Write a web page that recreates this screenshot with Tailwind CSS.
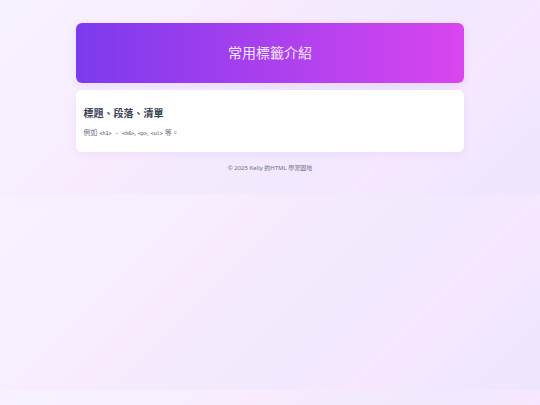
<!DOCTYPE html>
<html lang="zh-Hant">

<head>
    <meta charset="UTF-8">
    <meta name="viewport" content="width=device-width, initial-scale=1.0">
    <title>常用標籤介紹</title>
    <script src="https://cdn.jsdelivr.net/npm/@tailwindcss/browser@4"></script>
</head>

<body class="bg-[linear-gradient(135deg,#f8f1ff_0%,#f7efff_24%,#f8ebfe_36%,#f3eafe_52%,#f2e9fe_64%,#f6e8fe_74%,#f0e7fe_90%,#efe6fe_100%)] py-[23px] font-['Noto_Sans','Noto_Sans_CJK_JP',sans-serif] text-gray-700">
    <div class="mx-auto w-[72%]">
        <!-- Banner -->
        <header class="flex h-15 items-center justify-center rounded-md bg-linear-to-r/srgb from-[#7c3aed] to-[#d946ef] shadow-[0_2px_8px_rgba(124,58,237,0.12)]">
            <h1 class="text-[14px] leading-5 font-normal text-purple-100">常用標籤介紹</h1>
        </header>

        <!-- Content -->
        <main class="mt-[7px] rounded-md bg-white px-2 pt-[15px] pb-[13px] shadow-[0_2px_8px_rgba(124,58,237,0.08)]">
            <h2 class="text-[10px] leading-4 font-bold">標題、段落、清單</h2>
            <p class="mt-[6px] text-[7px] leading-3 text-gray-500">例如 <code class="font-['DejaVu_Sans_Mono',monospace] text-[6px] text-gray-700"><span class="text-[5px]">&lt;h1&gt;</span> - <span class="text-[5px]">&lt;h6&gt;</span></code>, <code class="font-['DejaVu_Sans_Mono',monospace] text-[5px] text-gray-700">&lt;p&gt;</code>, <code class="font-['DejaVu_Sans_Mono',monospace] text-[5px] text-gray-700">&lt;ul&gt;</code> 等。</p>
        </main>

        <footer class="mt-3 text-center text-[6px] leading-2 text-gray-500">© 2025 Kelly 的HTML 學習園地</footer>
    </div>
</body>

</html>
